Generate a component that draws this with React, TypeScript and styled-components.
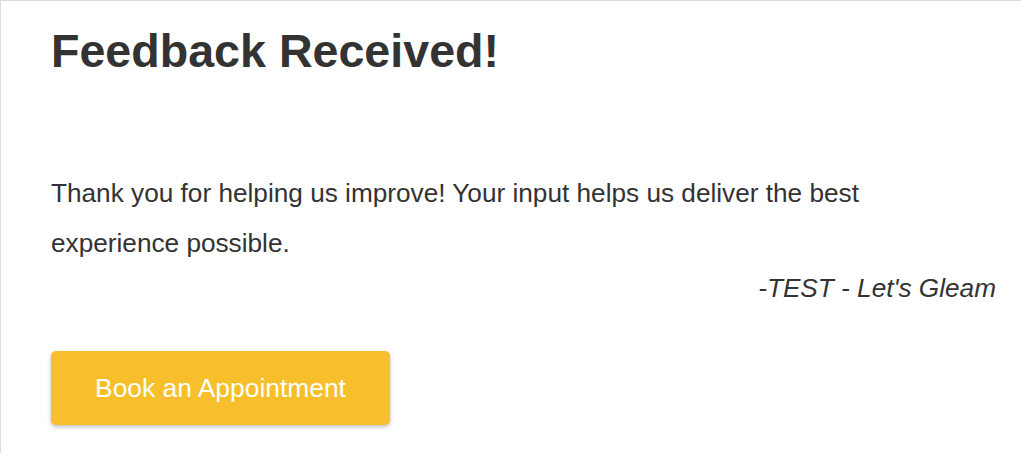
import React from "react";
import styled, { createGlobalStyle } from "styled-components";

const Global = createGlobalStyle`
  html, body { margin: 0; padding: 0; background: #fff; }
  body { font-family: "Liberation Sans", Arial, sans-serif; color: #333; }
`;

const Card = styled.div`
  box-sizing: border-box;
  width: 1021px;
  height: 453px;
  border-top: 1px solid #dcdcdc;
  border-left: 1px solid #dcdcdc;
  padding: 24px 25px 0 50px;
  display: flex;
  flex-direction: column;
  overflow: hidden;
`;

const Title = styled.h1`
  margin: 0;
  font-size: 46.6px;
  font-weight: 700;
  line-height: 53px;
  color: #333;
`;

const Message = styled.p`
  margin: 90px 0 0;
  max-width: 880px;
  font-size: 26.2px;
  line-height: 50px;
  color: #333;
`;

const Signature = styled.p`
  margin: 5px 0 0;
  text-align: right;
  font-style: italic;
  font-size: 26.2px;
  line-height: 30px;
  color: #333;
`;

const Button = styled.button`
  margin-top: 48px;
  align-self: flex-start;
  width: 339px;
  height: 74px;
  border: none;
  border-radius: 5px;
  background: #f6bf2b;
  color: #fff;
  font-family: "Liberation Sans", Arial, sans-serif;
  font-size: 26.4px;
  box-shadow: 0 2px 4px rgba(0, 0, 0, 0.25);
  cursor: pointer;
`;

export default function App() {
  return (
    <>
      <Global />
      <Card>
        <Title>Feedback Received!</Title>
        <Message>
          Thank you for helping us improve! Your input helps us deliver the best experience possible.
        </Message>
        <Signature>-TEST - Let's Gleam</Signature>
        <Button>Book an Appointment</Button>
      </Card>
    </>
  );
}
